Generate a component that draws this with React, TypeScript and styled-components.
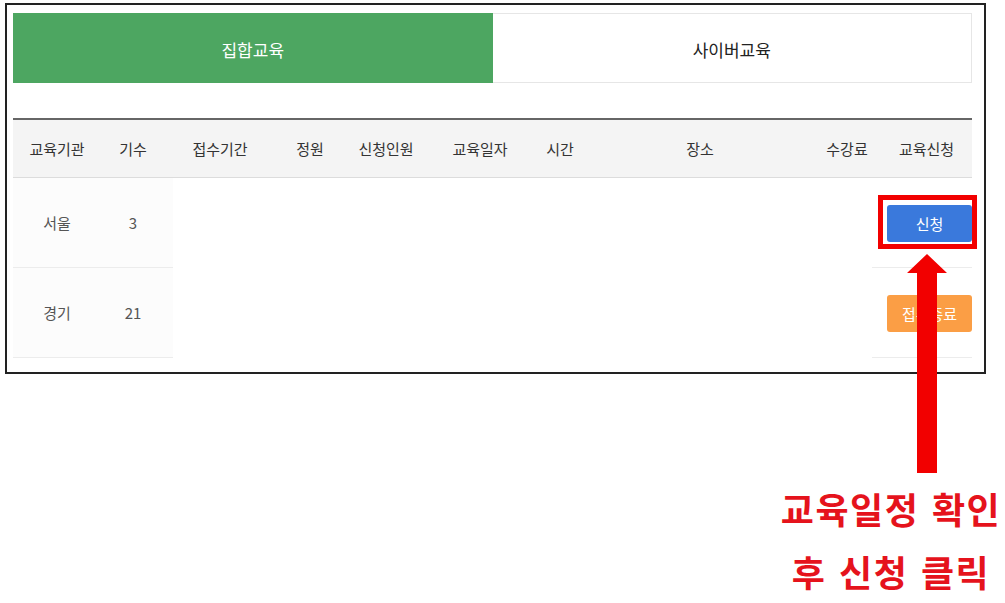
import React from 'react'
import styled, { createGlobalStyle } from 'styled-components'

const GlobalStyle = createGlobalStyle`
  html, body {
    margin: 0;
    padding: 0;
    background: #fff;
    overflow: hidden;
  }
  body {
    font-family: "Noto Sans CJK KR", "Noto Sans", sans-serif;
  }
`

const Page = styled.div`
  position: relative;
  width: 1005px;
  height: 603px;
  overflow: hidden;
`

const Frame = styled.div`
  box-sizing: border-box;
  width: 981px;
  margin: 3px 0 0 5px;
  border: 2px solid #222;
  padding: 8px 12px 14px 6px;
  background: #fff;
`

const Tabs = styled.div`
  display: grid;
  grid-template-columns: 1fr 1fr;
  height: 70px;
`

const Tab = styled.div<{ active?: boolean }>`
  display: flex;
  align-items: center;
  justify-content: center;
  padding-top: 3px;
  box-sizing: border-box;
  font-size: 17px;
  color: ${p => (p.active ? '#fff' : '#222')};
  background: ${p => (p.active ? '#4da661' : '#fff')};
  border: 1px solid ${p => (p.active ? '#4da661' : '#e6e6e6')};
  border-left: ${p => (p.active ? '1px solid #4da661' : 'none')};
`

const Table = styled.div`
  margin-top: 35px;
  font-size: 15px;
`

const HeadRow = styled.div`
  display: grid;
  grid-template-columns: 88px 64px 110px 70px 82px 106px 54px 226px 68px 91px;
  height: 60px;
  box-sizing: border-box;
  border-top: 2px solid #666;
  border-bottom: 1px solid #dcdcdc;
  background: #f4f4f4;
  color: #333;
`

const HeadCell = styled.div`
  display: flex;
  align-items: center;
  justify-content: center;
  white-space: nowrap;
`

const Row = styled.div`
  display: grid;
  grid-template-columns: 88px 72px 1fr 100px;
  height: 90px;
`

const Cell = styled.div<{ pad?: number }>`
  display: flex;
  align-items: center;
  justify-content: center;
  padding-right: ${p => p.pad || 0}px;
  box-sizing: border-box;
  background: #fcfcfc;
  border-bottom: 1px solid #ececec;
  color: #555;
`

const Blank = styled.div`
  background: #fff;
`

const ActionCell = styled.div`
  display: flex;
  align-items: center;
  justify-content: flex-end;
  border-bottom: 1px solid #ececec;
`

const ApplyButton = styled.div<{ kind: 'open' | 'closed' }>`
  display: flex;
  align-items: center;
  justify-content: center;
  width: 85px;
  height: 37px;
  margin-top: 1px;
  border-radius: 3px;
  font-size: 15px;
  color: #fff;
  background: ${p => (p.kind === 'open' ? '#3a79dc' : '#fb9e45')};
`

const HighlightBox = styled.span`
  position: absolute;
  left: 878px;
  top: 195px;
  width: 99px;
  height: 54px;
  box-sizing: border-box;
  border: 5px solid #f20000;
`

const Arrow = styled.svg`
  position: absolute;
  left: 907px;
  top: 254px;
`

const Note = styled.div`
  width: 236px;
  margin: 103px 0 0 773px;
  text-align: center;
  font-size: 36px;
  font-weight: 700;
  line-height: 63px;
  letter-spacing: 1.5px;
  word-spacing: 3px;
  color: #e5131c;
  white-space: nowrap;
`

const headers = ['교육기관', '기수', '접수기간', '정원', '신청인원', '교육일자', '시간', '장소', '수강료', '교육신청']

const rows = [
  { org: '서울', term: '3', open: true },
  { org: '경기', term: '21', open: false },
]

export default function App() {
  return (
    <Page>
      <GlobalStyle />
      <Frame>
        <Tabs>
          <Tab active>집합교육</Tab>
          <Tab>사이버교육</Tab>
        </Tabs>
        <Table>
          <HeadRow>
            {headers.map(h => <HeadCell key={h}>{h}</HeadCell>)}
          </HeadRow>
          {rows.map(r => (
            <Row key={r.org}>
              <Cell>{r.org}</Cell>
              <Cell pad={8}>{r.term}</Cell>
              <Blank />
              <ActionCell>
                <ApplyButton kind={r.open ? 'open' : 'closed'}>{r.open ? '신청' : '접수종료'}</ApplyButton>
              </ActionCell>
            </Row>
          ))}
        </Table>
      </Frame>
      <Note>
        <div>교육일정 확인</div>
        <div>후 신청 클릭</div>
      </Note>
      <HighlightBox />
      <Arrow width="40" height="219" viewBox="0 0 40 219">
        <polygon points="20,0 40,19 30,19 30,219 10,219 10,19 0,19" fill="#f20000" />
      </Arrow>
    </Page>
  )
}
